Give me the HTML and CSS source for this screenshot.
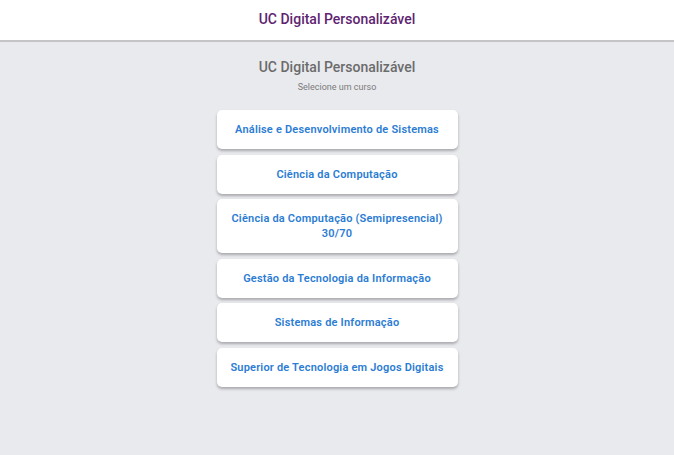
FILE: index.html
```html
<!DOCTYPE html>
<html lang="pt-BR">
<head>
<meta charset="UTF-8">
<meta name="viewport" content="width=device-width, initial-scale=1.0">
<title>UC Digital Personalizável</title>
<link rel="stylesheet" href="styles.css">
</head>
<body>

<header class="top-bar">
  <h1 class="top-title">UC Digital Personalizável</h1>
</header>

<main class="content">
  <h2 class="page-title">UC Digital Personalizável</h2>
  <p class="page-subtitle">Selecione um curso</p>

  <div class="course-list">
    <button class="course-btn">Análise e Desenvolvimento de Sistemas</button>
    <button class="course-btn">Ciência da Computação</button>
    <button class="course-btn">Ciência da Computação (Semipresencial) 30/70</button>
    <button class="course-btn">Gestão da Tecnologia da Informação</button>
    <button class="course-btn">Sistemas de Informação</button>
    <button class="course-btn">Superior de Tecnologia em Jogos Digitais</button>
  </div>
</main>

</body>
</html>
```

FILE: styles.css
```css
html, body {
  height: 100%;
}
body {
  margin: 0;
  background-color: #e9eaee;
  font-family: Roboto, "Liberation Sans", Arial, sans-serif;
}
.top-bar {
  height: 40px;
  background-color: #fff;
  border-bottom: 2px solid #c4c4c6;
  display: flex;
  align-items: center;
  justify-content: center;
}
.top-title {
  margin: 0 0 3px;
  font-size: 14px;
  font-weight: 500;
  color: #5e2470;
}
.content {
  display: flex;
  flex-direction: column;
  align-items: center;
  padding-top: 17px;
}
.page-title {
  margin: 0;
  font-size: 14px;
  font-weight: 500;
  color: #6b6b6b;
}
.page-subtitle {
  margin: 7px 0 0;
  font-size: 9px;
  color: #7a7a7a;
}
.course-list {
  display: flex;
  flex-direction: column;
  gap: 5.5px;
  width: 241px;
  margin-top: 18px;
}
.course-btn {
  padding: 12px 4px;
  border: none;
  border-radius: 5px;
  background-color: #fff;
  box-shadow: 0 2px 3px rgba(0, 0, 0, 0.28);
  font-family: Roboto, "Liberation Sans", Arial, sans-serif;
  font-size: 11px;
  font-weight: 600;
  letter-spacing: 0.2px;
  line-height: 15px;
  color: #2b7cd3;
  cursor: pointer;
}
```
